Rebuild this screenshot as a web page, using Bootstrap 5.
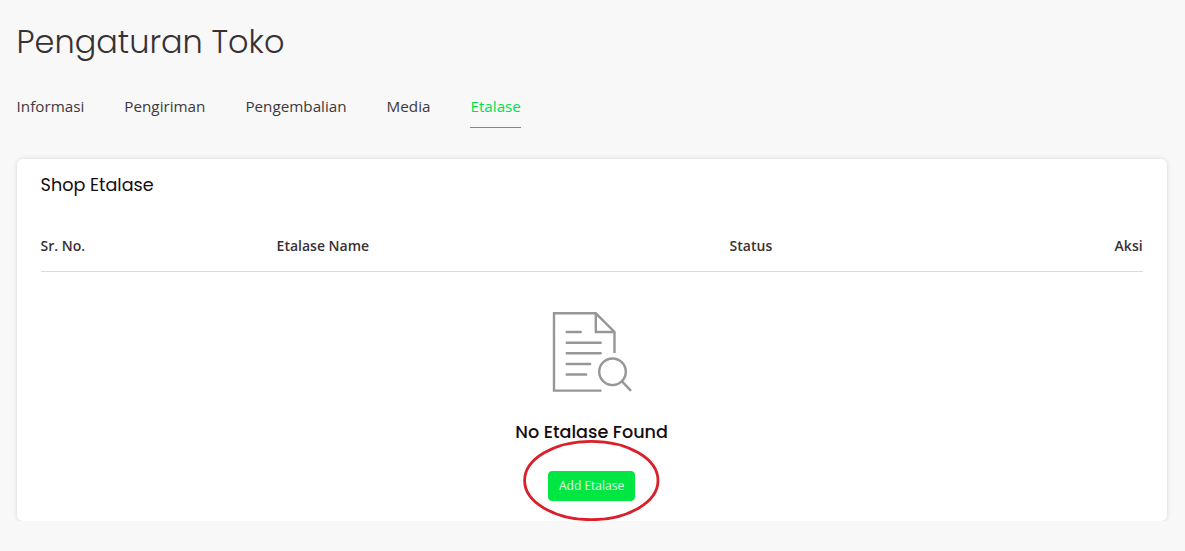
<!DOCTYPE html>
<html lang="id">
<head>
<meta charset="utf-8">
<meta name="viewport" content="width=device-width, initial-scale=1">
<title>Pengaturan Toko</title>
<link href="https://cdn.jsdelivr.net/npm/bootstrap@5.3.0/dist/css/bootstrap.min.css" rel="stylesheet">
<style>
body{background:#f8f8f8;color:#3a3135;font-family:"Open Sans","Noto Sans",sans-serif;font-size:15px}
.page{padding:22px 18.4px 0 16.6px}
.display-face{font-family:Poppins,Inter,sans-serif}
.page-title{font-size:31.95px;font-weight:300;line-height:40px;color:#373135}
.shop-tabs{gap:40px;margin-top:29px}
.shop-tabs .nav-link{padding:0;height:37px;font-size:15.23px;line-height:30px;color:#3e373b;border-bottom:1px solid transparent;transition:none}
.shop-tabs .nav-link.active{color:#00e04c;border-bottom-color:#00d64a}
.shop-card{margin-top:31px;height:362px;border-radius:6px;box-shadow:0 0 5px rgba(0,0,0,.13);padding:14px 24px 0}
.card-heading{font-size:17.6px;line-height:24px;font-weight:400;color:#160c12}
.shop-table{margin-top:23px;table-layout:fixed}
.shop-table th{font-size:14px;font-weight:600;line-height:21px;padding:15px 0;color:#3a3135;border-bottom:1px solid #dadada}
.empty-icon{margin-top:40px}
.empty-title{font-size:17.6px;font-weight:500;line-height:24px;color:#160c12;margin-top:27px}
.btn-add{width:87px;height:30px;padding:0;font-size:12px;line-height:28px;border-radius:4px;margin-top:27px;color:#e3ffeb;background:#00e642;border-color:#00e642}
.callout-ring{position:absolute;left:-26px;top:-5px;pointer-events:none}
</style>
</head>
<body>
<main class="page">
  <h1 class="page-title display-face mb-0">Pengaturan Toko</h1>
  <nav class="nav shop-tabs">
    <a class="nav-link" href="#">Informasi</a>
    <a class="nav-link" href="#">Pengiriman</a>
    <a class="nav-link" href="#">Pengembalian</a>
    <a class="nav-link" href="#">Media</a>
    <a class="nav-link active" aria-current="page" href="#">Etalase</a>
  </nav>
  <section class="card shop-card border-0">
    <h2 class="card-heading display-face mb-0">Shop Etalase</h2>
    <table class="table shop-table mb-0">
      <colgroup><col style="width:236px"><col style="width:453px"><col style="width:240px"><col></colgroup>
      <thead><tr><th>Sr. No.</th><th>Etalase Name</th><th>Status</th><th class="text-end">Aksi</th></tr></thead>
    </table>
    <div class="d-flex flex-column align-items-center">
      <svg class="empty-icon" width="80" height="81" viewBox="0 0 80 81" fill="none" stroke="#979797" stroke-width="2.4" aria-hidden="true">
        <path d="M49.5 78.600H2V1.300h41.800L62.500 20v21M43.800 1.300V20h18.700"/>
        <path d="M14.7 20h14M14.7 30.700h34M14.7 41.200h34M14.7 52h23.500M14.7 62.500h19.500" stroke-linecap="round"/>
        <circle cx="60.500" cy="59.800" r="13.300"/><path d="M70 69.300l9 9.500"/>
      </svg>
      <h3 class="empty-title display-face mb-0">No Etalase Found</h3>
      <div class="position-relative">
        <button type="button" class="btn btn-add">Add Etalase</button>
        <svg class="callout-ring" width="138" height="84" viewBox="0 0 138 84" fill="none" stroke="#d9202b" stroke-width="2.800" aria-hidden="true"><ellipse cx="69.300" cy="41.500" rx="66.700" ry="39.200"/></svg>
      </div>
    </div>
  </section>
</main>
<script src="https://cdn.jsdelivr.net/npm/bootstrap@5.3.0/dist/js/bootstrap.bundle.min.js"></script>
</body>
</html>
